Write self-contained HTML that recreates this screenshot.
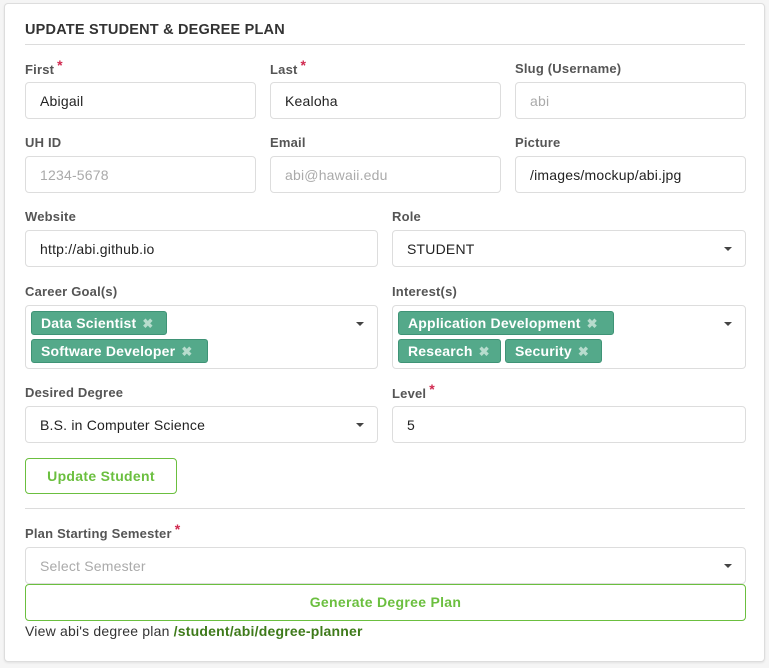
<!DOCTYPE html>
<html><head><style>
*{box-sizing:border-box;margin:0;padding:0}
body{width:769px;height:668px;background:#f5f5f5;font-family:"Liberation Sans",sans-serif;position:relative;overflow:hidden}
.card{position:absolute;left:4px;top:3px;width:761px;height:659px;background:#fff;border:1px solid #ddd;border-radius:4px;box-shadow:0 1px 2px rgba(0,0,0,.08)}
.a{position:absolute}
h1{position:absolute;left:25px;top:22px;font-size:14.5px;font-weight:bold;color:#333;letter-spacing:.2px}
.hr{position:absolute;left:25px;width:720px;height:1px;background:#dcdcdc}
.lbl{position:absolute;font-size:13px;font-weight:bold;color:#555;letter-spacing:.2px}
.lbl i{color:#d0294f;font-style:normal;font-size:14px;position:relative;top:-4px;margin-left:3px}
.in{position:absolute;height:37px;border:1px solid #ddd;border-radius:4px;font-size:14px;color:#222;padding:10px 14px;background:#fff;letter-spacing:.2px}
.ph{color:#aaa}
.dd::after{content:"";position:absolute;right:13px;top:16px;border:4px solid transparent;border-top:4px solid #444;border-bottom:0}
.tag{position:absolute;height:24px;background:#54a98a;border:1px solid #3f9376;border-radius:3px;color:#fff;font-size:14px;font-weight:bold;padding:3px 9px;white-space:nowrap;letter-spacing:.2px}
.tag b{color:#b7dccd;font-size:13px;margin-left:6px}
.btn{position:absolute;border:1px solid #6bbf3f;border-radius:4px;color:#6bbf3f;font-size:14px;font-weight:bold;text-align:center;background:#fff;letter-spacing:.3px}
</style></head><body>
<div class="card"></div>
<h1>UPDATE STUDENT &amp; DEGREE PLAN</h1>
<div class="hr" style="top:44px"></div>

<div class="lbl" style="left:25px;top:61px">First<i>*</i></div>
<div class="lbl" style="left:270px;top:61px">Last<i>*</i></div>
<div class="lbl" style="left:515px;top:61px">Slug (Username)</div>
<div class="in" style="left:25px;top:82px;width:231px">Abigail</div>
<div class="in" style="left:270px;top:82px;width:231px">Kealoha</div>
<div class="in ph" style="left:515px;top:82px;width:231px">abi</div>

<div class="lbl" style="left:25px;top:135px">UH ID</div>
<div class="lbl" style="left:270px;top:135px">Email</div>
<div class="lbl" style="left:515px;top:135px">Picture</div>
<div class="in ph" style="left:25px;top:156px;width:231px">1234-5678</div>
<div class="in ph" style="left:270px;top:156px;width:231px">abi@hawaii.edu</div>
<div class="in" style="left:515px;top:156px;width:231px">/images/mockup/abi.jpg</div>

<div class="lbl" style="left:25px;top:209px">Website</div>
<div class="lbl" style="left:392px;top:209px">Role</div>
<div class="in" style="left:25px;top:230px;width:353px">http://abi.github.io</div>
<div class="in dd" style="left:392px;top:230px;width:354px">STUDENT</div>

<div class="lbl" style="left:25px;top:284px">Career Goal(s)</div>
<div class="lbl" style="left:392px;top:284px">Interest(s)</div>
<div class="in dd" style="left:25px;top:305px;width:353px;height:64px"></div>
<div class="in dd" style="left:392px;top:305px;width:354px;height:64px"></div>
<div class="tag" style="left:31px;top:311px;width:136px">Data Scientist<b>✖</b></div>
<div class="tag" style="left:31px;top:339px;width:177px">Software Developer<b>✖</b></div>
<div class="tag" style="left:398px;top:311px;width:216px">Application Development<b>✖</b></div>
<div class="tag" style="left:398px;top:339px;width:103px">Research<b>✖</b></div>
<div class="tag" style="left:505px;top:339px;width:97px">Security<b>✖</b></div>

<div class="lbl" style="left:25px;top:385px">Desired Degree</div>
<div class="lbl" style="left:392px;top:385px">Level<i>*</i></div>
<div class="in dd" style="left:25px;top:406px;width:353px">B.S. in Computer Science</div>
<div class="in" style="left:392px;top:406px;width:354px">5</div>

<div class="btn" style="left:25px;top:458px;width:152px;height:36px;line-height:34px">Update Student</div>
<div class="hr" style="top:508px"></div>

<div class="lbl" style="left:25px;top:525px">Plan Starting Semester<i>*</i></div>
<div class="in dd ph" style="left:25px;top:547px;width:721px">Select Semester</div>
<div class="btn" style="left:25px;top:584px;width:721px;height:37px;line-height:35px">Generate Degree Plan</div>
<div class="a" style="left:25px;top:623px;font-size:14px;color:#333;letter-spacing:.2px">View abi's degree plan <b style="color:#3e7a1a">/student/abi/degree-planner</b></div>
</body></html>
